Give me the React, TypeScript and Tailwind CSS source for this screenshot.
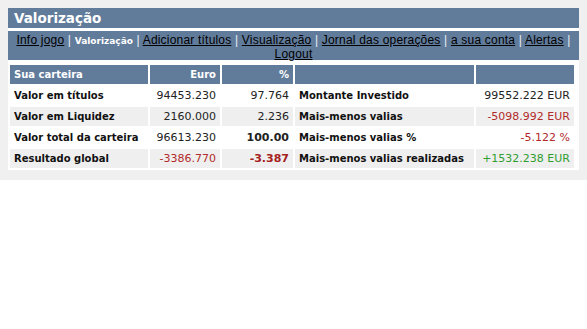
import React from 'react';

type Cell = { text: string; color?: string; bold?: boolean };
type Row = { label: string; euro: Cell; pct: Cell; label2: string; value2: Cell };

const rows: Row[] = [
  {
    label: 'Valor em títulos',
    euro: { text: '94453.230' },
    pct: { text: '97.764' },
    label2: 'Montante Investido',
    value2: { text: '99552.222 EUR' },
  },
  {
    label: 'Valor em Liquidez',
    euro: { text: '2160.000' },
    pct: { text: '2.236' },
    label2: 'Mais-menos valias',
    value2: { text: '-5098.992 EUR', color: 'text-[#b22a2a]' },
  },
  {
    label: 'Valor total da carteira',
    euro: { text: '96613.230' },
    pct: { text: '100.00', bold: true },
    label2: 'Mais-menos valias %',
    value2: { text: '-5.122 %', color: 'text-[#b22a2a]' },
  },
  {
    label: 'Resultado global',
    euro: { text: '-3386.770', color: 'text-[#b22a2a]' },
    pct: { text: '-3.387', color: 'text-[#a52020]', bold: true },
    label2: 'Mais-menos valias realizadas',
    value2: { text: '+1532.238 EUR', color: 'text-[#2f9e2f]' },
  },
];

const links = ['Info jogo', 'Valorização', 'Adicionar títulos', 'Visualização', 'Jornal das operações', 'a sua conta', 'Alertas'];

const verdana = "font-['DejaVu_Sans',Verdana,sans-serif]";

export default function App() {
  return (
    <div className="min-h-screen bg-white">
      <div className="bg-[#f0f0f0] p-2 pb-[10px]">
        <div className="bg-white">
          {/* titulo */}
          <div className={`h-5 bg-[#617b9b] pl-[6px] text-[13.5px] leading-5 font-bold text-white ${verdana}`}>
            Valorização
          </div>

          {/* menu */}
          <div className="mt-[3px] h-[29px] bg-[#617b9b] pt-[3px] text-center text-[12px] leading-[13px] tracking-[0.2px] font-['Liberation_Sans',Arial,sans-serif] text-[#e8edf3]">
            {links.map((l, i) => (
              <React.Fragment key={l}>
                {l === 'Valorização' ? (
                  <span className={`text-[9px] tracking-normal font-bold text-white ${verdana}`}>{l}</span>
                ) : (
                  <a href="#" className="text-black underline">{l}</a>
                )}
                {i < links.length && ' | '}
              </React.Fragment>
            ))}
            <br />
            <a href="#" className="text-black underline">Logout</a>
          </div>

          {/* tabela */}
          <div className={`mt-[3px] grid grid-cols-[138px_70px_71px_179px_98px] gap-[2px] p-[2px] text-[11px] ${verdana}`}>
            <div className="h-[19px] bg-[#617b9b] pl-1 text-[10px] font-bold leading-[19px] text-white">Sua carteira</div>
            <div className="h-[19px] bg-[#617b9b] pr-1 text-right text-[10px] font-bold leading-[19px] text-white">Euro</div>
            <div className="h-[19px] bg-[#617b9b] pr-1 text-right text-[10px] font-bold leading-[19px] text-white">%</div>
            <div className="h-[19px] bg-[#617b9b]"></div>
            <div className="h-[19px] bg-[#617b9b]"></div>

            {rows.map((r, i) => {
              const bg = i % 2 === 1 ? 'bg-[#efefef]' : 'bg-white';
              return (
                <React.Fragment key={r.label}>
                  <div className={`${bg} h-[19px] pl-1 text-[10px] font-bold leading-[19px] text-[#111]`}>{r.label}</div>
                  <div className={`${bg} h-[19px] pr-1 text-right leading-[19px] ${r.euro.color ?? 'text-[#222]'}`}>{r.euro.text}</div>
                  <div className={`${bg} h-[19px] pr-1 text-right leading-[19px] ${r.pct.bold ? 'font-bold' : ''} ${r.pct.color ?? 'text-[#222]'}`}>{r.pct.text}</div>
                  <div className={`${bg} h-[19px] pl-1 text-[10px] font-bold leading-[19px] text-[#111]`}>{r.label2}</div>
                  <div className={`${bg} h-[19px] pr-1 text-right leading-[19px] ${r.value2.color ?? 'text-[#222]'}`}>{r.value2.text}</div>
                </React.Fragment>
              );
            })}
          </div>
        </div>
      </div>
    </div>
  );
}
